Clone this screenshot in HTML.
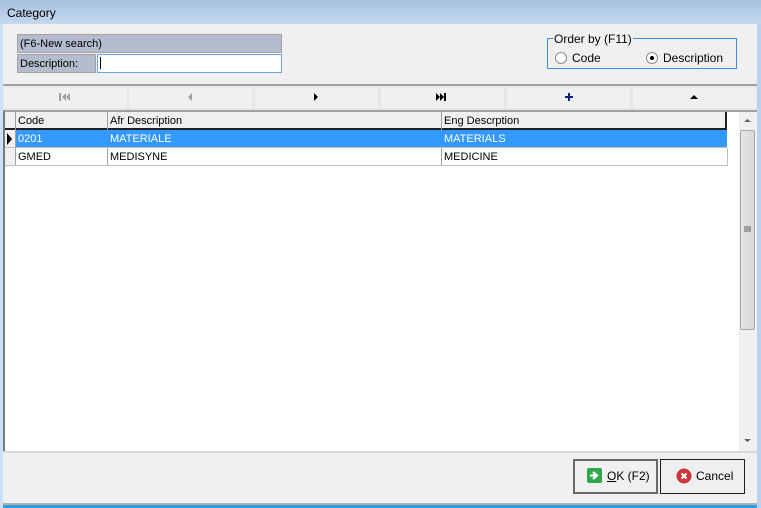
<!DOCTYPE html>
<html><head><style>
*{margin:0;padding:0;box-sizing:border-box}
body{width:761px;height:508px;overflow:hidden;background:#f0f0f0;font-family:"Liberation Sans",sans-serif;font-size:11px;color:#000;position:relative}
.a{position:absolute}
.t{white-space:nowrap}
</style></head><body>
<div class="a" style="left:0;top:0;width:761px;height:508px;border:1px solid #6f8fb5;border-top:none;border-bottom:3px solid #2ca0dc;background:#f0f0f0"></div>
<div class="a" style="left:0;top:0;width:761px;height:24px;background:linear-gradient(#a6c0de,#c4d8ee);"></div>
<div class="a t" style="left:7px;top:6px;font-size:12px">Category</div>
<div class="a" style="left:757px;top:24px;width:4px;height:484px;background:#b9d3ee"></div>
<div class="a" style="left:0;top:24px;width:3px;height:484px;background:#cfe0f2"></div>

<div class="a t" style="left:17px;top:34px;width:265px;height:19px;background:#b4bccd;border:1px solid #a3a3a3;padding:3px 2px">(F6-New search)</div>
<div class="a t" style="left:17px;top:54px;width:79px;height:19px;background:#b4bccd;border:1px solid #a3a3a3;padding:3px 2px">Description:</div>
<div class="a" style="left:97px;top:54px;width:185px;height:19px;background:#fff;border:1px solid #6aa6e4"></div>
<div class="a" style="left:100px;top:57px;width:1px;height:12px;background:#000"></div>

<div class="a" style="left:547px;top:38px;width:190px;height:31px;border:1px solid #3b8fe3"></div>
<div class="a t" style="left:553px;top:32px;background:#f0f0f0;padding:0 1px;font-size:12px">Order by (F11)</div>
<div class="a" style="left:555px;top:52px;width:12px;height:12px;border:1px solid #8a8a8a;border-radius:50%;background:#fff"></div>
<div class="a t" style="left:572px;top:51px;font-size:12px">Code</div>
<div class="a" style="left:646px;top:52px;width:12px;height:12px;border:1px solid #8a8a8a;border-radius:50%;background:#fff"></div>
<div class="a" style="left:650px;top:56px;width:4px;height:4px;border-radius:50%;background:#000"></div>
<div class="a t" style="left:663px;top:51px;font-size:12px">Description</div>

<div class="a" style="left:3px;top:84px;width:754px;height:2px;background:#a0a0a0"></div>
<div class="a" style="left:3px;top:86px;width:754px;height:24px;background:#e6e6e6"></div>
<div class="a" style="left:4px;top:87px;width:123px;height:21px;background:#f0f0f0"></div>
<div class="a" style="left:129px;top:87px;width:123px;height:21px;background:#f0f0f0"></div>
<div class="a" style="left:255px;top:87px;width:123px;height:21px;background:#f0f0f0"></div>
<div class="a" style="left:381px;top:87px;width:123px;height:21px;background:#f0f0f0"></div>
<div class="a" style="left:507px;top:87px;width:123px;height:21px;background:#f0f0f0"></div>
<div class="a" style="left:633px;top:87px;width:123px;height:21px;background:#f0f0f0"></div>
<svg class="a" style="left:0;top:86px" width="761" height="24">
<g fill="#a0a0a0"><rect x="59" y="7" width="2" height="8"/><path d="M66 7v8l-4-4z"/><path d="M70 7v8l-4-4z"/><path d="M192 7v8l-4-4z"/></g>
<g fill="#000"><path d="M314 7v8l4-4z"/><path d="M436 7v8l4-4z"/><path d="M440 7v8l4-4z"/><rect x="444" y="7" width="2" height="8"/><path d="M690 13h8l-4-4z"/></g>
<path d="M569 7v8M565 11h8" stroke="#102080" stroke-width="2"/>
</svg>

<div class="a" style="left:3px;top:110px;width:754px;height:341px;background:#fff;border-left:2px solid #7a7a7a;border-top:2px solid #a0a0a0"></div>
<!-- grid header -->
<div class="a" style="left:5px;top:112px;width:722px;height:18px;background:#f0f0f0;border-right:2px solid #202020;border-bottom:2px solid #202020"></div>
<div class="a" style="left:15px;top:112px;width:1px;height:54px;background:#a0a0a0"></div>
<div class="a" style="left:107px;top:112px;width:1px;height:54px;background:#a0a0a0"></div>
<div class="a" style="left:441px;top:112px;width:1px;height:54px;background:#a0a0a0"></div>
<div class="a t" style="left:18px;top:115px">Code</div>
<div class="a t" style="left:110px;top:115px">Afr Description</div>
<div class="a t" style="left:444px;top:115px">Eng Descrption</div>
<div class="a" style="left:16px;top:130px;width:711px;height:17px;background:#3399ff"></div>
<div class="a" style="left:5px;top:130px;width:10px;height:36px;background:#f0f0f0"></div>
<svg class="a" style="left:5px;top:130px" width="10" height="18"><path d="M2 3v12l5-6z" fill="#000"/></svg>
<div class="a" style="left:5px;top:147px;width:722px;height:1px;background:#c0c0c0"></div>
<div class="a" style="left:5px;top:165px;width:722px;height:1px;background:#c0c0c0"></div>
<div class="a" style="left:727px;top:148px;width:1px;height:18px;background:#c0c0c0"></div>
<div class="a t" style="left:18px;top:133px;color:#fff">0201</div>
<div class="a t" style="left:110px;top:133px;color:#fff">MATERIALE</div>
<div class="a t" style="left:444px;top:133px;color:#fff">MATERIALS</div>
<div class="a t" style="left:18px;top:151px">GMED</div>
<div class="a t" style="left:110px;top:151px">MEDISYNE</div>
<div class="a t" style="left:444px;top:151px">MEDICINE</div>
<!-- scrollbar -->
<div class="a" style="left:739px;top:112px;width:18px;height:339px;background:#f0f0f0"></div>
<div class="a" style="left:740px;top:130px;width:15px;height:200px;border:1px solid #a8a8a8;border-radius:2px;background:linear-gradient(90deg,#e4e4e4,#d8d8d8)"></div>
<svg class="a" style="left:739px;top:112px" width="18" height="339"><path d="M5 10h7l-3.5-3z M5 327h7l-3.5 3z" fill="#606060"/><path d="M5 115h7M5 117h7M5 119h7" stroke="#606060"/></svg>

<!-- bottom -->
<div class="a" style="left:3px;top:451px;width:754px;height:2px;background:#d8d8d8"></div>
<div class="a" style="left:3px;top:503px;width:754px;height:2px;background:#b0b0b0"></div>
<div class="a" style="left:573px;top:459px;width:85px;height:35px;border:2px solid #6a6a6a;background:#f0f0f0"></div>
<svg class="a" style="left:587px;top:468px" width="16" height="16"><rect width="15" height="15" rx="2" fill="#2ea84a"/><path d="M3 7.5h6M6 4l4 3.5-4 3.5" stroke="#fff" stroke-width="2.2" fill="none"/></svg>
<div class="a t" style="left:607px;top:469px;font-size:12px"><u>O</u>K (F2)</div>
<div class="a" style="left:660px;top:459px;width:85px;height:35px;border:1px solid #202020;background:#f0f0f0"></div>
<svg class="a" style="left:676px;top:468px" width="16" height="16"><circle cx="8" cy="8" r="7.5" fill="#d03838"/><path d="M5.5 5.5l5 5M10.5 5.5l-5 5" stroke="#fff" stroke-width="2"/></svg>
<div class="a t" style="left:696px;top:469px;font-size:12px">Cancel</div>
</body></html>
